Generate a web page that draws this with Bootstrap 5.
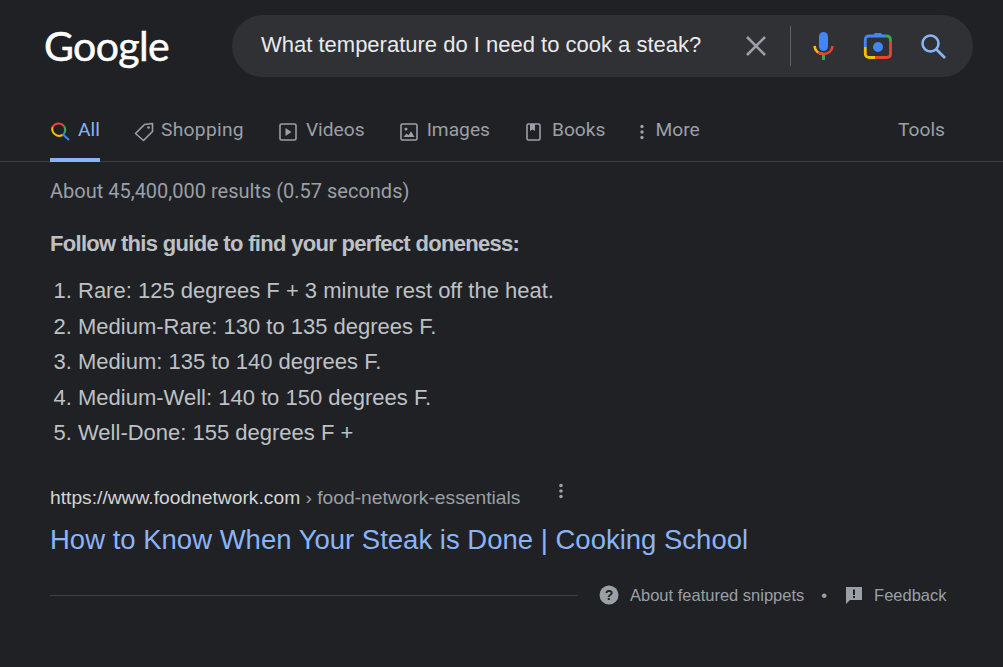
<!DOCTYPE html>
<html lang="en">
<head>
<meta charset="utf-8">
<title>Search</title>
<link href="https://cdn.jsdelivr.net/npm/bootstrap@5.3.0/dist/css/bootstrap.min.css" rel="stylesheet">
<style>
html,body{height:667px;overflow:hidden}
body{background:#202124;font-family:"Liberation Sans",Arial,sans-serif;color:#bdc1c6}
.top-area{padding:15px 30px 0 44px;height:77px}
.logo-word{width:188px;font-family:"Lato",sans-serif;font-size:41px;line-height:62px;color:#fff;letter-spacing:-.6px;-webkit-text-stroke:.5px #fff}
.search-pill{width:741px;height:62px;background:#303134;border-radius:31px;padding:0 27px 0 29px}
.query{font-size:22px;color:#e8eaed;line-height:1;padding-bottom:3px}
.pill-sep{width:1px;height:40px;background:#5f6368}
.x-icon{margin-right:17px}
.mic-icon{margin-left:15px}
.cam-icon,.find-icon{margin-left:27px}
.tabs-row{height:85px;padding:0 58px 0 50px;border-bottom:1px solid #3c4043;font-family:"Roboto",sans-serif;font-size:19.2px;color:#9aa0a6}
.tab-item{height:100%;padding-top:39px;gap:9px;display:flex;align-items:flex-start;line-height:28px;position:relative;white-space:nowrap;margin-right:35px}
.tab-active{color:#8ab4f8;width:50px;margin-right:34px}
.tab-active::after{content:"";position:absolute;left:0;right:0;bottom:-1px;height:4px;background:#8ab4f8}
.tab-all-ico{margin-top:5px;margin-right:-1px}
.tab-shop-ico{margin-top:6px;margin-right:-2px}
.tab-shop-label{letter-spacing:.3px}
.tab-box-ico{margin-top:7px}
.tab-images{margin-right:36px}
.tab-books{margin-right:34px}
.tab-book-ico{margin-top:7px;margin-right:1px}
.tab-dots-ico{margin-top:8px;margin-right:1px}
.results-body{padding:0 50px;width:948px}
.stats{font-family:"Roboto",sans-serif;font-size:20px;line-height:24px;color:#9aa0a6;margin-top:17px}
.guide{font-size:22px;font-weight:700;color:#bdc1c6;line-height:28px;margin-top:27px;letter-spacing:-.69px}
.steps{font-size:22px;line-height:35.6px;color:#bdc1c6;padding:0;margin:15px 0 0 28px}
.src-line{margin-top:35px;font-size:19.24px;line-height:24px;height:24px}
.src-host{color:#d2d5d9}
.src-path{color:#9aa0a6}
.src-dots{margin:-3px 0 0 38px}
.res-title{font-size:27.5px;line-height:36px;color:#8ab4f8;margin-top:12px;white-space:nowrap}
.foot-row{margin-top:20.5px;height:34px;font-size:16.5px;color:#9aa0a6;white-space:nowrap}
.foot-line{width:528px;height:1px;background:#3c4043}
.foot-help{margin-left:21px}
.foot-about{margin-left:11px}
.foot-bullet{margin:0 18px 0 17px}
.foot-fb{margin-left:11px}
</style>
</head>
<body>
<header class="top-area d-flex">
  <div class="logo-word flex-shrink-0">Google</div>
  <div class="search-pill d-flex align-items-center">
    <div class="query flex-grow-1">What temperature do I need to cook a steak?</div>
    <svg width="26" height="26" viewBox="0 0 26 26" class="x-icon flex-shrink-0"><path d="M4 4 22 22M22 4 4 22" stroke="#9aa0a6" stroke-width="2.6" fill="none"/></svg>
    <div class="pill-sep mx-1"></div>
    <svg width="26" height="32" viewBox="0 0 26 32" class="mic-icon flex-shrink-0"><rect x="9" y="2" width="9" height="19" rx="4.5" fill="#4285f4"/><path d="M4.500 16c.5 5 4 8 9 8" stroke="#fbbc04" stroke-width="2.6" fill="none"/><path d="M8 22.500c1.500 1 3.500 1.500 5.500 1.500 5 0 8.500-3 9-8" stroke="#ea4335" stroke-width="2.600" fill="none"/><path d="M13.500 25v5" stroke="#34a853" stroke-width="3" fill="none"/></svg>
    <svg width="30" height="28" viewBox="0 0 30 28" class="cam-icon flex-shrink-0"><path d="M9.500 4l2.500-3h6l2.500 3z" fill="#4285f4"/><path d="M2.300 15V8c0-2.500 1.500-4 4-4H23" stroke="#4285f4" stroke-width="2.800" fill="none"/><path d="M23 4c2.800 0 4.500 1.500 4.500 4v1" stroke="#34a853" stroke-width="2.800" fill="none"/><path d="M27.500 9v13c0 2.500-1.500 3.500-4 3.500H12" stroke="#ea4335" stroke-width="2.800" fill="none"/><path d="M12 25.500H6.500c-2.500 0-4.200-1-4.200-3.500v-7" stroke="#fbbc04" stroke-width="2.800" fill="none"/><circle cx="15" cy="15" r="5" fill="#4285f4"/></svg>
    <svg width="26" height="26" viewBox="0 0 26 26" class="find-icon flex-shrink-0"><circle cx="10.500" cy="10.500" r="8" stroke="#8ab4f8" stroke-width="2.600" fill="none"/><path d="M16.500 16.500 25 25" stroke="#8ab4f8" stroke-width="2.600" fill="none"/></svg>
  </div>
</header>
<nav class="tabs-row d-flex justify-content-between">
  <div class="d-flex h-100">
    <div class="tab-item tab-active">
      <svg width="20" height="20" viewBox="0 0 20 20" class="tab-all-ico flex-shrink-0"><path d="M2.500 6A7 7 0 0 1 14 5" stroke="#ea4335" stroke-width="2" fill="none"/><path d="M14 5a7 7 0 0 1 .500 7" stroke="#34a853" stroke-width="2" fill="none"/><path d="M14.500 12a7 7 0 0 1-2 2" stroke="#4285f4" stroke-width="2" fill="none"/><path d="M12.500 14A7 7 0 0 1 2.500 6" stroke="#fbbc04" stroke-width="2" fill="none"/><path d="M13 13.500l6 5.500" stroke="#4285f4" stroke-width="2" fill="none"/></svg>
      <span>All</span>
    </div>
    <div class="tab-item">
      <svg width="20" height="20" viewBox="0 0 20 20" class="tab-shop-ico flex-shrink-0"><path d="M1.500 11.500 10.500 2.500 18.500 1.500 18.500 9.500 9.500 18.500z" stroke="#9aa0a6" stroke-width="1.600" fill="none" stroke-linejoin="round"/><circle cx="14.500" cy="5.500" r="1.300" fill="#9aa0a6"/></svg>
      <span class="tab-shop-label">Shopping</span>
    </div>
    <div class="tab-item">
      <svg width="18" height="18" viewBox="0 0 18 18" class="tab-box-ico flex-shrink-0"><rect x="1" y="1" width="16" height="16" rx="1.500" stroke="#9aa0a6" stroke-width="1.600" fill="none"/><path d="M6.500 5v8l6-4z" fill="#9aa0a6"/></svg>
      <span>Videos</span>
    </div>
    <div class="tab-item tab-images">
      <svg width="18" height="18" viewBox="0 0 18 18" class="tab-box-ico flex-shrink-0"><rect x="1" y="1" width="16" height="16" rx="1.500" stroke="#9aa0a6" stroke-width="1.600" fill="none"/><circle cx="6" cy="6" r="1.500" fill="#9aa0a6"/><path d="M3.500 14l3-3.500 2 1.800 2.500-4 3.500 5.700z" fill="#9aa0a6"/></svg>
      <span>Images</span>
    </div>
    <div class="tab-item tab-books">
      <svg width="16" height="18" viewBox="0 0 16 18" class="tab-book-ico flex-shrink-0"><rect x="1" y="1" width="13" height="16" rx="1.500" stroke="#9aa0a6" stroke-width="1.600" fill="none"/><path d="M4 1h5v7L6.500 6.500 4 8z" fill="#9aa0a6"/></svg>
      <span>Books</span>
    </div>
    <div class="tab-item me-0">
      <svg width="6" height="16" viewBox="0 0 6 16" class="tab-dots-ico flex-shrink-0"><circle cx="3" cy="2.500" r="1.700" fill="#9aa0a6"/><circle cx="3" cy="8" r="1.700" fill="#9aa0a6"/><circle cx="3" cy="13.500" r="1.700" fill="#9aa0a6"/></svg>
      <span>More</span>
    </div>
  </div>
  <div class="tab-item me-0">Tools</div>
</nav>
<main class="results-body">
  <div class="stats">About 45,400,000 results (0.57 seconds)</div>
  <div class="guide">Follow this guide to find your perfect doneness:</div>
  <ol class="steps">
    <li>Rare: 125 degrees F + 3 minute rest off the heat.</li>
    <li>Medium-Rare: 130 to 135 degrees F.</li>
    <li>Medium: 135 to 140 degrees F.</li>
    <li>Medium-Well: 140 to 150 degrees F.</li>
    <li>Well-Done: 155 degrees F +</li>
  </ol>
  <div class="src-line d-flex">
    <span class="src-host">https://www.foodnetwork.com</span><span class="src-path">&nbsp;› food-network-essentials</span>
    <svg width="6" height="16" viewBox="0 0 6 16" class="src-dots"><circle cx="3" cy="2.500" r="1.800" fill="#9aa0a6"/><circle cx="3" cy="8" r="1.800" fill="#9aa0a6"/><circle cx="3" cy="13.500" r="1.800" fill="#9aa0a6"/></svg>
  </div>
  <div class="res-title">How to Know When Your Steak is Done | Cooking School</div>
  <div class="foot-row d-flex align-items-center">
    <div class="foot-line flex-shrink-0"></div>
    <svg width="20" height="20" viewBox="0 0 20 20" class="foot-help flex-shrink-0"><circle cx="10" cy="10" r="9.500" fill="#9aa0a6"/><text x="10" y="15" text-anchor="middle" font-size="14" font-weight="700" font-family="Liberation Sans" fill="#202124">?</text></svg>
    <span class="foot-about">About featured snippets</span>
    <span class="foot-bullet">•</span>
    <svg width="18" height="18" viewBox="0 0 18 18" class="flex-shrink-0"><path d="M1 1h16v13H5l-4 4z" fill="#9aa0a6"/><rect x="8" y="3.500" width="2" height="5.500" fill="#202124"/><rect x="8" y="10" width="2" height="2" fill="#202124"/></svg>
    <span class="foot-fb">Feedback</span>
  </div>
</main>
<script src="https://cdn.jsdelivr.net/npm/bootstrap@5.3.0/dist/js/bootstrap.bundle.min.js"></script>
</body>
</html>
